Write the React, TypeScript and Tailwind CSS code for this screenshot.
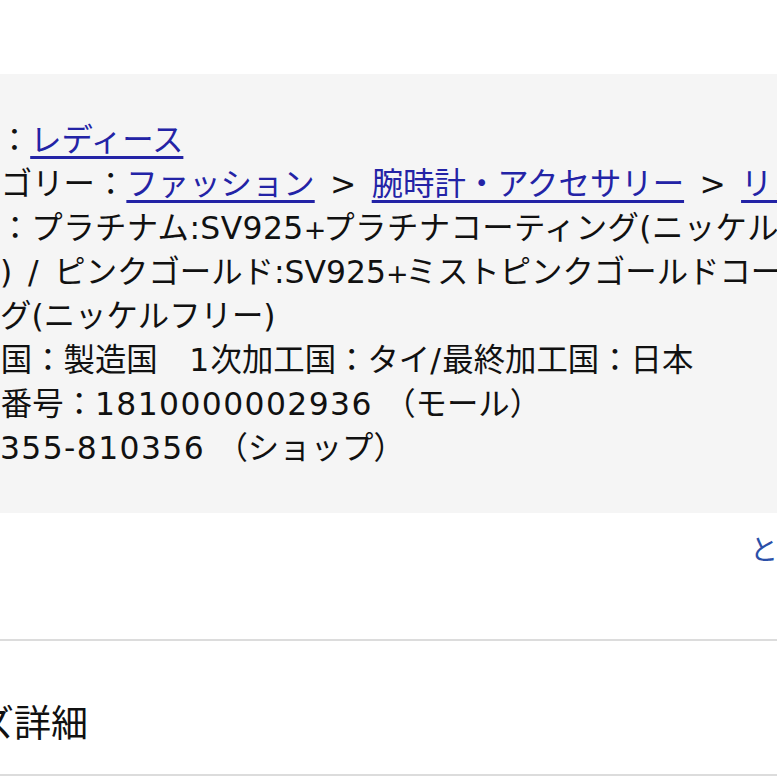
import React from "react";

const linkCls = "text-[#2323a6] underline decoration-[2.5px] underline-offset-[5px]";

const Sep: React.FC = () => <span className="inline-block w-[57px] text-center">&gt;</span>;

// digit runs are a touch wider in the original rendering
const D: React.FC<{ children: React.ReactNode }> = ({ children }) => (
  <span className="tracking-[1.4px]">{children}</span>
);

const Plus: React.FC = () => <span className="text-[27px] leading-none tracking-[-3px]">+</span>;

const App: React.FC = () => {
  return (
    <div
      className="w-[777px] h-[777px] overflow-hidden bg-white text-[#111]"
      style={{ fontFamily: '"DejaVu Sans", "Noto Sans CJK JP", sans-serif' }}
    >
      <div className="h-[74px]" />

      {/* spec block */}
      <div className="h-[439px] bg-[#f5f5f5] pt-[44px] text-[31.4px] leading-[44px] overflow-hidden">
        <div className="-ml-[64px] whitespace-nowrap">
          対象：<span className={linkCls}>レディース</span>
        </div>
        <div className="-ml-[62px] whitespace-nowrap">
          カテゴリー：<span className={linkCls}>ファッション</span>
          <Sep />
          <span className={linkCls}>腕時計・アクセサリー</span>
          <Sep />
          <span className={linkCls}>リング</span>
        </div>
        <div className="-ml-[64px] whitespace-nowrap tracking-[0.4px]">
          素材：プラチナム:SV925<Plus />プラチナコーティング(ニッケルフリー
        </div>
        <div className="whitespace-nowrap">
          )<span className="inline-block w-[42px] text-center">/</span>ピンクゴールド:SV925<Plus />ミストピンクゴールドコーティン
        </div>
        <div className="whitespace-nowrap">グ(ニッケルフリー)</div>
        <div className="-ml-[62px] whitespace-nowrap">
          原産国：製造国　<D>1</D>次加工国：タイ<D>/</D>最終加工国：日本
        </div>
        <div className="-ml-[62px] whitespace-nowrap">
          商品番号：<D>1810000002936 </D>（モール）
        </div>
        <div className="whitespace-nowrap">
          <D>355-810356 </D>（ショップ）
        </div>
      </div>

      {/* toggle link row */}
      <div className="h-[126px] pt-[20px] pl-[750px] whitespace-nowrap text-[28px] leading-[36px] text-[#2b50a8]">
        とじる
      </div>

      <div className="h-[2px] bg-[#dcdcdc]" />

      {/* heading */}
      <div className="h-[133px] pt-[62px] -ml-[96px] whitespace-nowrap text-[37px] leading-[44px] text-[#111]">
        サイズ詳細
      </div>
      <div className="h-[2px] bg-[#dcdcdc]" />
    </div>
  );
};

export default App;
